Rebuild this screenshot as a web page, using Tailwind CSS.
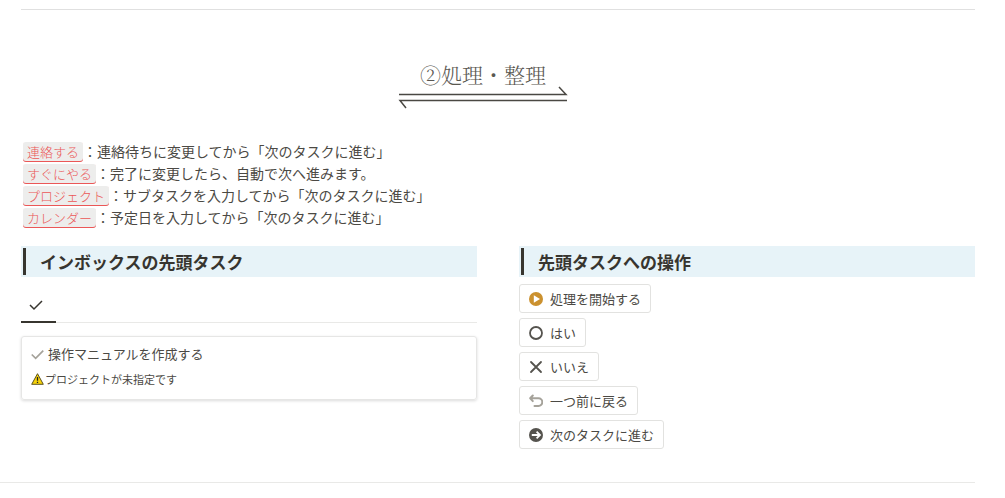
<!DOCTYPE html>
<html lang="ja">
<head>
  <meta charset="UTF-8" />
  <meta name="viewport" content="width=device-width, initial-scale=1.0" />
  <title>②処理・整理</title>
  <script src="https://cdn.jsdelivr.net/npm/@tailwindcss/browser@4"></script>
</head>
<body class="bg-white text-[#4b4944] font-['Noto_Sans_CJK_JP',sans-serif]">

  <main class="pr-[30px] pt-[9px]">
    <div class="pl-[21px]">
      <hr class="border-[#e0e0e0]" />

      <header class="flex flex-col items-center mt-[49px] pr-[30px]">
        <h1 class="text-[21px] leading-[30px] font-light font-['Noto_Serif_CJK_JP','Noto_Serif_CJK_SC','Noto_Sans_CJK_JP',serif] text-[#5a5852]">②処理・整理</h1>
        <svg class="w-[170px] h-[24px] -mt-[3px]" viewBox="0 0 170 24" fill="none" stroke="#4a4843" stroke-width="1.5" aria-hidden="true">
          <path d="M1 8.500h167l-7-7.500" />
          <path d="M169 14.500H2l6 7.500" />
        </svg>
      </header>

      <ul class="mt-[30px] text-[14px] leading-[22px]">
        <li class="flex items-center pl-[2px]"><code class="mt-px px-[4px] text-[13px] leading-[20px] font-light font-['Noto_Sans_CJK_JP',sans-serif] text-[#eb5757] bg-[#ededec] rounded-[3px] shadow-[inset_0_-1px_0_#eb5757]">連絡する</code>：連絡待ちに変更してから「次のタスクに進む」</li>
        <li class="flex items-center pl-[2px]"><code class="mt-px px-[4px] text-[13px] leading-[20px] font-light font-['Noto_Sans_CJK_JP',sans-serif] text-[#eb5757] bg-[#ededec] rounded-[3px] shadow-[inset_0_-1px_0_#eb5757]">すぐにやる</code>：完了に変更したら、自動で次へ進みます。</li>
        <li class="flex items-center pl-[2px]"><code class="mt-px px-[4px] text-[13px] leading-[20px] font-light font-['Noto_Sans_CJK_JP',sans-serif] text-[#eb5757] bg-[#ededec] rounded-[3px] shadow-[inset_0_-1px_0_#eb5757]">プロジェクト</code>：サブタスクを入力してから「次のタスクに進む」</li>
        <li class="flex items-center pl-[2px]"><code class="mt-px px-[4px] text-[13px] leading-[20px] font-light font-['Noto_Sans_CJK_JP',sans-serif] text-[#eb5757] bg-[#ededec] rounded-[3px] shadow-[inset_0_-1px_0_#eb5757]">カレンダー</code>：予定日を入力してから「次のタスクに進む」</li>
      </ul>

      <div class="grid grid-cols-2 gap-[42px] mt-[18px]">
        <section>
          <div class="bg-[#e7f3f8] p-[2px]">
            <h2 class="border-l-3 border-[#37352f] pl-[14px] text-[17px] leading-[27px] font-bold text-[#37352f]">インボックスの先頭タスク</h2>
          </div>

          <div class="flex mt-[12px] border-b border-[#e9e9e7]">
            <button type="button" aria-label="タスク" class="flex items-center justify-center w-[35px] h-[34px] -mb-px border-b-2 border-[#37352f]">
              <svg class="w-[14px] h-[14px] -ml-[6px]" viewBox="0 0 14 14" fill="none" stroke="#37352f" stroke-width="1.5" aria-hidden="true"><path d="M1 7l4 4 8-8" /></svg>
            </button>
          </div>

          <article class="mt-[13px] px-[9px] pt-[6px] pb-[10px] border border-[#e6e6e5] rounded-[3px] shadow-[0_1px_3px_rgba(15,15,15,0.15)]">
            <h3 class="flex items-center gap-[4px] text-[13px] leading-[22px]">
              <svg class="w-[13px] h-[13px]" viewBox="0 0 14 14" fill="none" stroke="#a5a29a" stroke-width="1.8" aria-hidden="true"><path d="M.8 7l4.200 4.200 8.200-8.400" /></svg>
              操作マニュアルを作成する
            </h3>
            <p class="flex items-center gap-px mt-[4px] text-[11px] leading-[20px]">
              <svg class="w-[13px] h-[12px]" viewBox="0 0 13 12" aria-hidden="true">
                <path d="M6.500.7L12.300 11.300H.7z" fill="#f7d308" stroke="#5c5320" stroke-width="1" stroke-linejoin="round" />
                <path d="M6.500 4v3.800M6.500 8.800v1.300" stroke="#222" stroke-width="1.300" />
              </svg>
              プロジェクトが未指定です
            </p>
          </article>
        </section>

        <section>
          <div class="bg-[#e7f3f8] p-[2px]">
            <h2 class="border-l-3 border-[#37352f] pl-[14px] text-[17px] leading-[27px] font-bold text-[#37352f]">先頭タスクへの操作</h2>
          </div>

          <div class="flex flex-col items-start gap-[5px] mt-[7px] text-[13px] leading-[27px]">
            <button type="button" class="flex items-center gap-[7px] px-[9px] border border-[#e2e2e0] rounded-[3px]">
              <svg class="w-[14px] h-[14px]" viewBox="0 0 14 14" aria-hidden="true"><circle cx="7" cy="7" r="7" fill="#cb912f" /><path d="M4.800 3.300v7.400L11 7z" fill="#fff" /></svg>
              処理を開始する
            </button>
            <button type="button" class="flex items-center gap-[7px] px-[9px] border border-[#e2e2e0] rounded-[3px]">
              <svg class="w-[14px] h-[14px]" viewBox="0 0 14 14" fill="none" stroke="#55534e" stroke-width="1.800" aria-hidden="true"><circle cx="7" cy="7" r="6" /></svg>
              はい
            </button>
            <button type="button" class="flex items-center gap-[7px] px-[9px] border border-[#e2e2e0] rounded-[3px]">
              <svg class="w-[14px] h-[14px]" viewBox="0 0 14 14" fill="none" stroke="#55534e" stroke-width="1.800" stroke-linecap="round" aria-hidden="true"><path d="M2 2l10 10M12 2L2 12" /></svg>
              いいえ
            </button>
            <button type="button" class="flex items-center gap-[7px] px-[9px] border border-[#e2e2e0] rounded-[3px]">
              <svg class="w-[14px] h-[14px]" viewBox="0 0 14 14" fill="none" stroke="#a5a29a" stroke-width="2" stroke-linecap="round" stroke-linejoin="round" aria-hidden="true"><path d="M3.800 1.500L1.200 4.300 3.800 7.100M1.500 4.300h8a3.800 3.800 0 0 1 0 7.600H5.500" /></svg>
              一つ前に戻る
            </button>
            <button type="button" class="flex items-center gap-[7px] px-[9px] border border-[#e2e2e0] rounded-[3px]">
              <svg class="w-[14px] h-[14px]" viewBox="0 0 14 14" aria-hidden="true"><circle cx="7" cy="7" r="7" fill="#55534e" /><path d="M2.800 7h8M7.600 3.600L11 7l-3.400 3.400" fill="none" stroke="#fff" stroke-width="1.800" /></svg>
              次のタスクに進む
            </button>
          </div>
        </section>
      </div>
    </div>

    <hr class="mt-[33px] border-[#e9e9e7]" />
  </main>

</body>
</html>
